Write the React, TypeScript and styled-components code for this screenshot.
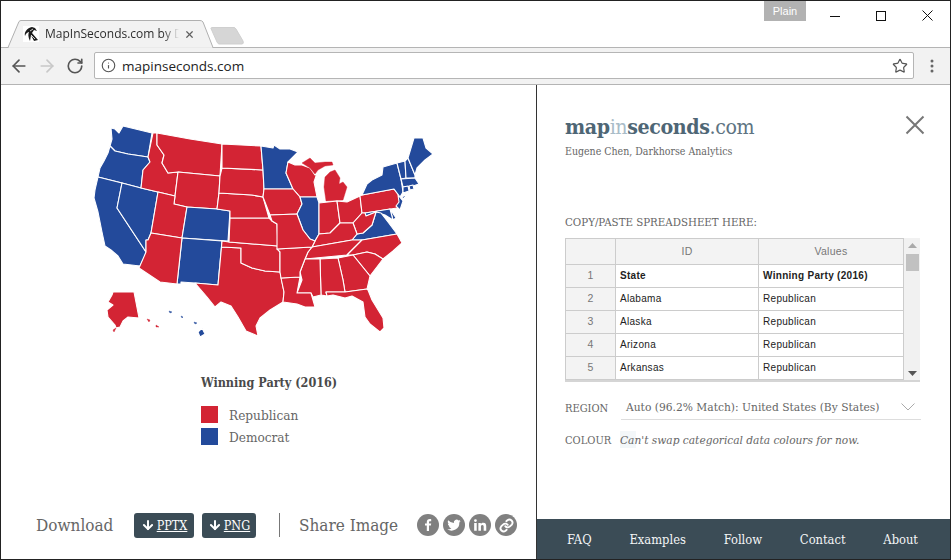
import React from "react";
import styled, { createGlobalStyle } from "styled-components";
import { ArrowLeft, ArrowRight, RotateCw, Info, Star, X, ArrowDown } from "lucide-react";

const SERIF = `"DejaVu Serif Condensed", "DejaVu Serif", "Liberation Serif", serif`;
const R = "#d32434";
const B = "#234a9b";

const Global = createGlobalStyle`
  html, body { margin: 0; padding: 0; background: #fff; }
`;

const Frame = styled.div`
  width: 951px; height: 560px; box-sizing: border-box; border: 1px solid #222;
  display: flex; flex-direction: column; position: relative; overflow: hidden;
  font-family: ${SERIF}; background: #fff;
`;
const TabStrip = styled.div`
  height: 47px; flex: none; display: flex; align-items: flex-end; padding-left: 5px; position: relative;
`;
const PlainBadge = styled.div`
  position: absolute; top: 0; left: 763px; width: 42px; height: 20px; background: #b2b2b2; color: #fff;
  font: 11px "Liberation Sans", sans-serif; text-align: center; line-height: 20px;
`;
const WinControls = styled.div`
  position: absolute; top: 0; right: 0; display: flex;
`;
const WinButton = styled.div`
  width: 46px; height: 29px; display: flex; align-items: center; justify-content: center;
`;
const Tab = styled.div`
  width: 208px; height: 28px; position: relative; display: flex; align-items: center; padding-left: 17px; box-sizing: border-box;
`;
const TabShape = styled.svg`
  position: absolute; left: 0; top: 0;
`;
const Favicon = styled.svg`
  position: relative; flex: none; margin-right: 6px;
`;
const TabTitle = styled.div`
  position: relative; width: 134px; white-space: nowrap; font: 12px "Open Sans", sans-serif; color: #2e2e2e; padding-bottom: 2px;
  -webkit-mask-image: linear-gradient(to right, #000 88%, transparent 100%);
  mask-image: linear-gradient(to right, #000 88%, transparent 100%);
`;
const TabClose = styled.div`
  position: relative; margin-left: 5px; display: flex; color: #5f5f5f;
`;
const NewTab = styled.svg`
  margin: 0 0 3px -4px; flex: none;
`;
const StripLine = styled.div`
  position: absolute; left: 0; right: 0; bottom: 0; height: 1px; background: #b4b4b4;
`;
const Toolbar = styled.div`
  height: 37px; flex: none; box-sizing: border-box; background: #f2f2f2; border-bottom: 1px solid #b4b4b4;
  display: flex; align-items: center; padding: 0 0 1px 4px;
`;
const NavIcon = styled.div<{ $off?: boolean }>`
  width: 28px; display: flex; justify-content: center; color: ${p => (p.$off ? "#c8c8c8" : "#555")};
`;
const Omnibox = styled.div`
  margin-left: 5px; width: 820px; height: 27px; box-sizing: border-box; background: #fff; border: 1px solid #b5b5b5; border-radius: 2px;
  display: flex; align-items: center; padding: 0 5px 0 6px; color: #555;
`;
const Url = styled.div`
  margin-left: 6px; flex: 1; font: 13.5px "Open Sans", sans-serif; color: #222;
`;
const Kebab = styled.svg`
  margin-left: 16px; flex: none;
`;
const Main = styled.div`
  flex: 1; display: flex; min-height: 0;
`;
const Left = styled.div`
  width: 536px; flex: none; box-sizing: border-box; border-right: 1px solid #333; display: flex; flex-direction: column;
`;
const MapSvg = styled.svg`
  display: block; flex: none;
`;
const Legend = styled.div`
  margin: 24px 0 0 200px; display: flex; flex-direction: column;
`;
const LegendTitle = styled.div`
  font-size: 12.5px; font-weight: 700; color: #4a4a4a; line-height: 18px; margin-bottom: 11px;
`;
const LegendRow = styled.div`
  display: flex; align-items: center; height: 22px; gap: 11px; font-size: 13.5px; color: #666;
`;
const LegendText = styled.span`
  margin-top: 2px;
`;
const Swatch = styled.span<{ $c: string }>`
  width: 17px; height: 17px; background: ${p => p.$c}; flex: none;
`;
const ShareBar = styled.div`
  margin-top: auto; height: 40px; margin-bottom: 14px; display: flex; align-items: center; padding-left: 35px; color: #666;
`;
const BarLabel = styled.div<{ $w: number }>`
  font-size: 17px; white-space: nowrap; width: ${p => p.$w}px;
`;
const DlButton = styled.a<{ $w: number; $ml: number }>`
  width: ${p => p.$w}px; margin-left: ${p => p.$ml}px; height: 25px; box-sizing: border-box; background: #3b4c56; border-radius: 3px; color: #fff;
  display: flex; align-items: center; justify-content: center; gap: 2px; font-size: 12.5px; text-decoration: underline;
`;
const BarDivider = styled.div`
  width: 1px; height: 24px; background: #777; margin: 0 19px 0 23px;
`;
const ShareIcons = styled.div`
  margin-left: 20px; display: flex; gap: 4px;
`;
const Circle = styled.div`
  width: 22px; height: 22px; border-radius: 50%; background: #808080; color: #fff; display: flex; align-items: center; justify-content: center;
`;
const Right = styled.div`
  flex: 1; min-width: 0; display: flex; flex-direction: column; position: relative;
`;
const RightBody = styled.div`
  flex: 1; padding: 27px 30px 0 28px;
`;
const Logo = styled.div`
  font-size: 21.2px; line-height: 30px; color: #4e6675; letter-spacing: -0.4px;
`;
const LogoBold = styled.b`
  font-weight: 700;
`;
const LogoLight = styled.span<{ $pale?: boolean }>`
  color: ${p => (p.$pale ? "#a9bcc8" : "#5e7482")};
  font-weight: 400;
`;
const Byline = styled.div`
  font-size: 10.5px; line-height: 14px; color: #666; margin-top: 2px;
`;
const CloseBtn = styled.svg`
  position: absolute; right: 25px; top: 30px;
`;
const SheetLabel = styled.div`
  font-size: 11.4px; line-height: 14px; color: #666; margin-top: 57px;
`;
const SheetWrap = styled.div`
  margin-top: 9px; display: flex; height: 144px; overflow: hidden; width: 355px; border-bottom: 2px solid #d5d5d5; box-sizing: border-box;
`;
const Sheet = styled.table`
  border-collapse: collapse; table-layout: fixed; width: 338px; font: 10px "Liberation Sans", sans-serif; letter-spacing: 0.3px; color: #222;
  flex: none; align-self: flex-start;
`;
const Th = styled.th<{ $w: number }>`
  box-sizing: border-box; width: ${p => p.$w}px; height: 26px; padding: 0 0 2px; border: 1px solid #ccc; background: #f3f3f3; font-weight: 400; color: #777; font-size: 10.5px;
`;
const RowHead = styled.td`
  box-sizing: border-box; height: 23px; padding: 0 0 2px; border: 1px solid #ccc; background: #f3f3f3; color: #777; text-align: center; font-size: 10.5px;
`;
const Cell = styled.td<{ $bold?: boolean }>`
  box-sizing: border-box; height: 23px; padding: 0 4px 2px; border: 1px solid #ccc; font-weight: ${p => (p.$bold ? 700 : 400)}; white-space: nowrap;
`;
const Scroll = styled.div`
  width: 17px; flex: none; background: #f1f1f1; display: flex; flex-direction: column; align-items: center; position: relative;
`;
const ScrollThumb = styled.div`
  width: 13px; height: 17px; background: #c1c1c1; margin-top: 6px;
`;
const ScrollArrow = styled.svg<{ $down?: boolean }>`
  ${p => (p.$down ? "position: absolute; bottom: 4px;" : "margin-top: 5px;")}
`;
const FieldRow = styled.div<{ $mt: number }>`
  margin-top: ${p => p.$mt}px; display: flex; align-items: center; width: 356px; font-size: 11px; color: #666; position: relative;
`;
const FieldLabel = styled.div`
  width: 56px; flex: none; font-size: 11px;
`;
const SelectBox = styled.div`
  flex: 1; height: 24px; box-sizing: border-box; border-bottom: 1px solid #ddd; display: flex; align-items: center; justify-content: space-between; padding: 0 6px 2px 5px;
  font-size: 11.9px; color: #666; white-space: nowrap;
`;
const ColourNote = styled.div`
  position: relative; font-style: italic; font-size: 11.8px; color: #666; white-space: nowrap; margin-left: -1px;
`;
const GhostSwatch = styled.div`
  position: absolute; left: 55px; top: -2px; width: 16px; height: 17px; background: #f3f7f9;
`;
const FooterNav = styled.div`
  height: 40px; flex: none; background: #3b4c56; display: flex; align-items: center; justify-content: space-between; padding: 0 32px 0 30px;
  color: #f4f6f7; font-size: 12.8px; font-weight: 400;
`;

type St = [string, string, string];
const STATES: St[] = [
  ["WA", B, "111,128 115,129 119,133 123,126 152,133 148,157 128,154 115,151 110,146 112,139"],
  ["OR", B, "110,146 115,151 128,154 148,157 150,162 143,170 141,188 122,183 98,177 100,168 104,161 108,153"],
  ["CA", B, "98,177 122,183 117,208 146,252 145,256 140,266 123,264 118,256 111,250 105,246 102,232 100,222 98,212 94,198 95,190"],
  ["NV", B, "122,183 141,188 158,192 151,233 148,240 146,240 146,252 117,208"],
  ["ID", R, "153,133 157,133 157,145 164,155 162,163 168,173 178,172 175,196 158,192 141,188 143,170 150,162 148,157"],
  ["MT", R, "157,133 190,139 222,144 220,176 178,172 168,173 162,163 164,155 157,145"],
  ["WY", R, "178,172 220,176 219,193 217,209 187,207 174,204 175,196"],
  ["UT", R, "158,192 175,196 174,204 187,207 182,238 151,233"],
  ["CO", B, "187,207 217,209 230,211 228,241 182,238"],
  ["NM", B, "182,238 222,241 218,285 195,283 181,282 181,284 177,284"],
  ["AZ", R, "146,240 148,240 151,233 182,238 177,284 160,282 139,268 146,252"],
  ["TX", R, "221.500,247 241,248 241,263 252,268 265,271 280,272 284,292 283,302 270,310 260,318 256,326 258,336 246,331 238,317 231,306 221,302 215,307 207,297 195,283 218,285"],
  ["OK", R, "222,241 229,242 278,246 280,252 280,272 265,271 252,268 241,263 241,248 221.500,247"],
  ["KS", R, "230,218 269,218 272,221 277,224 278,246 229,242"],
  ["NE", R, "219,193 252,195 263,197 269,218 230,218 230,211 217,209"],
  ["SD", R, "222,168 263,170 264,189 263,197 252,195 219,193 220,176"],
  ["ND", R, "222,144 261,146 263,170 222,168"],
  ["MN", B, "261,146 273,148 274,145 280,149 290,149 298,152 288,162 286,173 293,189 264,189 263,170"],
  ["WI", R, "286,173 288,162 295,165 302,165 310,168 315,175 318,170 314,182 317,197 300,197 293,189"],
  ["MIU", R, "302,163 310,158 315,163 325,162 332,162 333,165 325,166 318,170 315,174 310,168"],
  ["MIL", R, "325,177 330,172 335,170 340,178 339,184 343,182 347,187 343,200 326,201 324,187"],
  ["IA", R, "264,189 293,189 300,197 302,204 297,214 270,215 263,197"],
  ["IL", B, "300,197 317,197 319,203 319,234 315,241 310,239 303,230 297,214 302,204"],
  ["IN", R, "319,203 337,201 340,223 330,233 319,234"],
  ["OH", R, "337,201 347,202 360,196 362,213 353,223 340,223"],
  ["PA", R, "360,196 362,195 394,189 400,197 400,203 397,208 365,213 362,213"],
  ["NY", B, "367,184 372,180 382,175 383,167 397,163 401,179 403,192 400,197 394,189 362,195"],
  ["LI", B, "402,197 410,192 403,199"],
  ["VT", B, "397,163 405,161 406,178 401,179"],
  ["NH", B, "405,161 408,158 415,175 415,178 406,178"],
  ["ME", B, "408,158 414,138 423,138 426,148 433,154 425,160 417,168 415,175"],
  ["MA", B, "401,179 415,178 419,184 413,186 403,187"],
  ["CT", B, "403,187 408,186 409,191 403,193"],
  ["RI", B, "409,186 413,185 414,189 410,190"],
  ["NJ", B, "398,195 403,201 400,210 396,206 399,202"],
  ["DE", B, "390,209 396,218 393,220"],
  ["MD", B, "365,213 390,209 393,220 385,215 376,212 366,216"],
  ["VA", B, "352,240 357,234 363,233 372,225 376,212 381,213 388,222 397,234 362,240"],
  ["WV", R, "353,223 362,213 365,213 366,216 376,212 372,225 363,233 357,234"],
  ["KY", R, "319,234 330,233 340,223 353,223 357,234 352,240 312,247 315,241"],
  ["TN", R, "312,247 352,240 362,240 355,247 347,255 305,259 308,252"],
  ["NC", R, "362,240 397,234 402,243 393,251 383,259 375,254 367,252 353,255 347,255 355,247"],
  ["SC", R, "353,255 367,252 375,254 383,259 370,276"],
  ["GA", R, "338,258 353,255 370,276 367,289 345,292 343,280"],
  ["AL", R, "320,259 338,258 343,280 345,292 326,292 327,296 321,295"],
  ["MS", R, "305,259 320,259 321,295 313,297 311,293 297,293 302,280 300,272"],
  ["LA", R, "281,278 300,277 297,293 311,293 315,307 305,307 297,304 283,302 284,292"],
  ["AR", R, "277,249 312,247 308,252 305,259 300,272 300,277 281,278 280,272 280,252"],
  ["MO", R, "270,215 297,214 303,230 310,239 315,241 312,247 277,249 277,224 272,221"],
  ["FL", R, "326,292 345,292 367,289 368,290 372,300 383,318 384,328 380,332 370,324 365,317 363,302 352,296 345,298 333,295 327,296"],
  ["AK", R, "113,292 134,292 139,318 128,317 123,321 120,327 116,328 115,325 108,317 107,310 113,305 108,302 112,295"],
  ["AK0", R, "113,330 116,328 114,332"],
  ["AK1", R, "147,319 150,320 149,322"],
  ["AK2", R, "156,325 159,327 156,327"],
  ["HI", B, "202,328 205,334 200,337 198,332"],
  ["HI1", B, "169,311 172,312 170,313"],
  ["HI2", B, "181,316 183,317 182,318"],
  ["HI3", B, "194,322 197,323 195,324"],
];

const ROWS = [
  ["2", "Alabama", "Republican"],
  ["3", "Alaska", "Republican"],
  ["4", "Arizona", "Republican"],
  ["5", "Arkansas", "Republican"],
  ["", "", ""],
];

const USMap = () => (
  <MapSvg width={535} height={265} viewBox="1 85 535 265">
    {STATES.map(([id, c, pts]) => (
      <polygon key={id} points={pts} fill={c} stroke={id.length === 3 ? c : "#fff"} strokeWidth={id.length === 3 ? 0.4 : 1.1} strokeLinejoin="round" />
    ))}
  </MapSvg>
);

export default function App() {
  return (
    <Frame>
      <Global />
      <TabStrip>
        <StripLine />
        <PlainBadge>Plain</PlainBadge>
        <WinControls>
          <WinButton>
            <svg width="10" height="10" viewBox="0 0 10 10" shapeRendering="crispEdges"><rect x="0" y="5" width="10" height="1" fill="#111" /></svg>
          </WinButton>
          <WinButton>
            <svg width="10" height="10" viewBox="0 0 10 10" shapeRendering="crispEdges"><rect x=".5" y=".5" width="9" height="9" fill="none" stroke="#111" /></svg>
          </WinButton>
          <WinButton>
            <svg width="11" height="11" viewBox="0 0 11 11"><path d="M.5.5l10 10M10.500.5l-10 10" stroke="#111" fill="none" /></svg>
          </WinButton>
        </WinControls>
        <Tab>
          <TabShape width={208} height={28} viewBox="0 0 208 28">
            <path d="M0 27.500 H2 L13 1.500 Q14 .5 15 .5 H194 Q196 .5 197 2 L207 27.500" fill="#f2f2f2" stroke="#b0b0b0" />
            <path d="M3 28 H206" stroke="#f2f2f2" strokeWidth={1.5} />
          </TabShape>
          <Favicon width={16} height={16} viewBox="0 0 16 16">
            <rect width="16" height="16" fill="#fff" />
            <path d="M9 1 C4 2 1 6 2 10 C3 7 5 6 6 6 C5 8 5 11 7 15 L8 9 L11 15 L15 14 L9 7 L11 4 L14 5 L12 2 Z" fill="#1c1c1c" />
            <path d="M7 5 L10 3 M8 9 L12 13" stroke="#fff" strokeWidth=".8" />
          </Favicon>
          <TabTitle>MapInSeconds.com by D</TabTitle>
          <TabClose><X size={11} strokeWidth={2.6} /></TabClose>
        </Tab>
        <NewTab width={36} height={18} viewBox="0 0 36 18">
          <path d="M1 1.500 Q1 .5 2 .5 H24 Q25 .5 26 2 L33 14 Q34 17 32 17 H9 Q8 17 7 15 Z" fill="#d6d6d6" stroke="#cfcfcf" />
        </NewTab>
      </TabStrip>
      <Toolbar>
        <NavIcon><ArrowLeft size={20} strokeWidth={2} /></NavIcon>
        <NavIcon $off><ArrowRight size={20} strokeWidth={2} /></NavIcon>
        <NavIcon><RotateCw size={18} strokeWidth={2.2} /></NavIcon>
        <Omnibox>
          <Info size={15} strokeWidth={1.8} />
          <Url>mapinseconds.com</Url>
          <Star size={16} strokeWidth={1.8} />
        </Omnibox>
        <Kebab width={4} height={14} viewBox="0 0 4 14">
          <circle cx="2" cy="2" r="1.500" fill="#666" />
          <circle cx="2" cy="7" r="1.500" fill="#666" />
          <circle cx="2" cy="12" r="1.500" fill="#666" />
        </Kebab>
      </Toolbar>
      <Main>
        <Left>
          <USMap />
          <Legend>
            <LegendTitle>Winning Party (2016)</LegendTitle>
            <LegendRow><Swatch $c={R} /><LegendText>Republican</LegendText></LegendRow>
            <LegendRow><Swatch $c={B} /><LegendText>Democrat</LegendText></LegendRow>
          </Legend>
          <ShareBar>
            <BarLabel $w={98}>Download</BarLabel>
            <DlButton $w={60} $ml={0}><ArrowDown size={14} strokeWidth={3.4} />PPTX</DlButton>
            <DlButton $w={54} $ml={8}><ArrowDown size={14} strokeWidth={3.4} />PNG</DlButton>
            <BarDivider />
            <BarLabel $w={98}>Share Image</BarLabel>
            <ShareIcons>
              <Circle>
                <svg width="14" height="14" viewBox="0 0 14 14"><path d="M8 13V7.600h1.900l.3-2.200H8V4.200c0-.6.2-1 1.100-1h1.100V1.200C10 1.200 9.400 1.100 8.700 1.100 7 1.100 5.800 2.100 5.800 4v1.400H4v2.200h1.800V13z" fill="#fff" /></svg>
              </Circle>
              <Circle>
                <svg width="16" height="16" viewBox="0 0 24 24"><path d="M22 5.900c-.7.3-1.500.5-2.400.6.900-.5 1.500-1.300 1.800-2.300-.8.5-1.700.8-2.600 1a4.100 4.100 0 0 0-7 3.700A11.600 11.600 0 0 1 3.400 4.700a4.100 4.100 0 0 0 1.300 5.500c-.7 0-1.300-.2-1.900-.5 0 2 1.400 3.700 3.300 4.100-.6.200-1.200.2-1.800.1.500 1.600 2 2.800 3.800 2.800A8.200 8.200 0 0 1 2 18.400 11.600 11.600 0 0 0 20 8.100c.8-.6 1.500-1.300 2-2.200z" fill="#fff" /></svg>
              </Circle>
              <Circle>
                <svg width="14" height="14" viewBox="0 0 24 24"><path d="M2 8.500h4.400V22H2zM4.200 2a2.400 2.400 0 1 1 0 4.800 2.400 2.400 0 0 1 0-4.800zM9.200 8.500h4.200v1.900c.6-1.100 2-2.200 4.100-2.200 4.400 0 5.200 2.800 5.200 6.500V22h-4.400v-6.500c0-1.600 0-3.500-2.200-3.500s-2.500 1.700-2.500 3.400V22H9.200z" fill="#fff" /></svg>
              </Circle>
              <Circle>
                <svg width="15" height="15" viewBox="0 0 24 24" fill="none" stroke="#fff" strokeWidth="3" strokeLinecap="round"><path d="M10 13a5 5 0 0 0 7.500.5l3-3a5 5 0 0 0-7-7l-1.700 1.700" /><path d="M14 11a5 5 0 0 0-7.500-.5l-3 3a5 5 0 0 0 7 7l1.700-1.700" /></svg>
              </Circle>
            </ShareIcons>
          </ShareBar>
        </Left>
        <Right>
          <RightBody>
            <Logo>
              <LogoBold>map</LogoBold><LogoLight $pale>in</LogoLight><LogoBold>seconds</LogoBold><LogoLight>.com</LogoLight>
            </Logo>
            <Byline>Eugene Chen, Darkhorse Analytics</Byline>
            <SheetLabel>COPY/PASTE SPREADSHEET HERE:</SheetLabel>
            <SheetWrap>
              <Sheet>
                <thead>
                  <tr><Th $w={50} /><Th $w={143}>ID</Th><Th $w={145}>Values</Th></tr>
                </thead>
                <tbody>
                  <tr><RowHead>1</RowHead><Cell $bold>State</Cell><Cell $bold>Winning Party (2016)</Cell></tr>
                  {ROWS.map((r, i) => (
                    <tr key={i}><RowHead>{r[0]}</RowHead><Cell>{r[1]}</Cell><Cell>{r[2]}</Cell></tr>
                  ))}
                </tbody>
              </Sheet>
              <Scroll>
                <ScrollArrow width={9} height={5} viewBox="0 0 9 5"><path d="M4.500 0 9 5H0z" fill="#aaa" /></ScrollArrow>
                <ScrollThumb />
                <ScrollArrow $down width={9} height={5} viewBox="0 0 9 5"><path d="M4.500 5 9 0H0z" fill="#555" /></ScrollArrow>
              </Scroll>
            </SheetWrap>
            <FieldRow $mt={14}>
              <FieldLabel>REGION</FieldLabel>
              <SelectBox>
                Auto (96.2% Match): United States (By States)
                <svg width="14" height="8" viewBox="0 0 14 8"><path d="M.5.5 7 7 13.500.5" fill="none" stroke="#aaa" /></svg>
              </SelectBox>
            </FieldRow>
            <FieldRow $mt={13}>
              <GhostSwatch />
              <FieldLabel>COLOUR</FieldLabel>
              <ColourNote>Can't swap categorical data colours for now.</ColourNote>
            </FieldRow>
          </RightBody>
          <CloseBtn width={20} height={20} viewBox="0 0 20 20"><path d="M1.500 1.500l17 17M18.500 1.500l-17 17" stroke="#777" strokeWidth="2" fill="none" /></CloseBtn>
          <FooterNav>
            <span>FAQ</span><span>Examples</span><span>Follow</span><span>Contact</span><span>About</span>
          </FooterNav>
        </Right>
      </Main>
    </Frame>
  );
}
